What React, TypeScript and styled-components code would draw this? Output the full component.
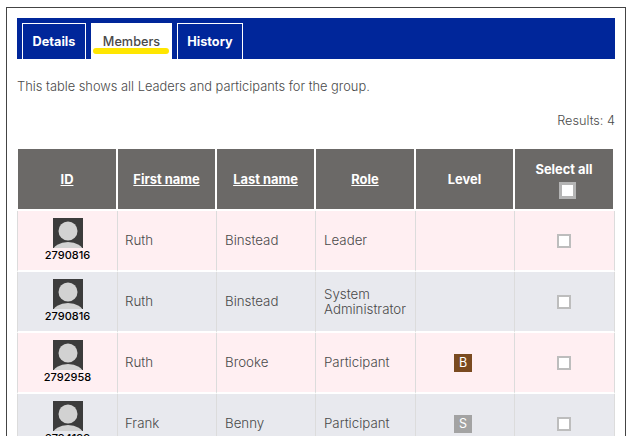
import styled, { createGlobalStyle } from "styled-components";

interface Member {
  id: string;
  first: string;
  last: string;
  role: string;
  level?: "B" | "S";
}

const members: Member[] = [
  { id: "2790816", first: "Ruth", last: "Binstead", role: "Leader" },
  { id: "2790816", first: "Ruth", last: "Binstead", role: "System Administrator" },
  { id: "2792958", first: "Ruth", last: "Brooke", role: "Participant", level: "B" },
  { id: "2794199", first: "Frank", last: "Benny", role: "Participant", level: "S" },
];

const GlobalStyle = createGlobalStyle`
  html, body {
    margin: 0;
    height: 436px;
    overflow: hidden;
    background: #fff;
  }
  body {
    font-family: "Inter", "Liberation Sans", sans-serif;
    color: #4a4a4a;
  }
`;

const Frame = styled.div`
  box-sizing: border-box;
  width: 620px;
  margin: 7px 0 0 6px;
  padding: 10px 10px 0 10px;
  border: 1px solid #444;
`;

const TabBar = styled.nav`
  display: flex;
  align-items: flex-end;
  gap: 5px;
  height: 41px;
  padding-left: 5px;
  background: #00269a;
`;

const Tab = styled.a<{ $active?: boolean; $width: number }>`
  box-sizing: border-box;
  position: relative;
  display: flex;
  align-items: center;
  justify-content: center;
  width: ${(p) => p.$width}px;
  height: 36px;
  border: 1px solid #fff;
  border-bottom: 0;
  background: ${(p) => (p.$active ? "#fff" : "#00269a")};
  color: ${(p) => (p.$active ? "#4a4a4a" : "#fff")};
  font-size: 12.7px;
  font-weight: ${(p) => (p.$active ? 500 : 700)};
`;

const Highlight = styled.span`
  position: absolute;
  left: 1px;
  right: 2px;
  bottom: 5px;
  height: 6px;
  border-radius: 3px;
  background: #ffe600;
`;

const Intro = styled.p`
  margin: 20px 0 0;
  font-size: 12.85px;
  line-height: 16px;
  font-weight: 300;
`;

const Results = styled.p`
  margin: 18px 0 0;
  text-align: right;
  font-size: 12.7px;
  line-height: 16px;
  font-weight: 300;
`;

const Table = styled.table`
  width: 598px;
  margin-top: 20px;
  border-collapse: separate;
  border-spacing: 0;
  table-layout: fixed;
`;

const HeadCell = styled.th`
  box-sizing: border-box;
  height: 62px;
  padding: 0;
  border-right: 2px solid #fff;
  border-bottom: 2px solid #fff;
  background: #6b6967;
  color: #fff;
  font-size: 12.9px;
  font-weight: 700;
  text-align: center;
  vertical-align: middle;

  &:first-child {
    border-left: 1px solid #fff;
  }
`;

const SortLink = styled.span`
  text-decoration: underline;
`;

const SelectAll = styled.div`
  display: flex;
  flex-direction: column;
  align-items: center;
  gap: 5px;
  padding-top: 2px;
`;

const HeadCheck = styled.span`
  box-sizing: border-box;
  width: 17px;
  height: 17px;
  margin-left: 6px;
  border: 3px solid #b4b4b4;
  background: #fff;
`;

const Row = styled.tr<{ $tint: "pink" | "grey" }>`
  background: ${(p) => (p.$tint === "pink" ? "#ffeff2" : "#e8e9ee")};
`;

const Cell = styled.td`
  box-sizing: border-box;
  height: 61px;
  padding: 0 8px;
  border-right: 1px solid #dcdcdc;
  border-bottom: 2px solid #fff;
  font-size: 13.3px;
  line-height: 15px;
  font-weight: 300;
  vertical-align: middle;

  &:first-child {
    border-left: 1px solid #dcdcdc;
  }
`;

const FirstNameCell = styled(Cell)`
  padding-left: 7px;
`;

const CentreCell = styled(Cell)`
  padding: 0;
  text-align: center;
`;

const IdBlock = styled.div`
  display: flex;
  flex-direction: column;
  align-items: center;
  padding-bottom: 2px;
  color: #000;
  font-size: 11px;
  line-height: 14px;
  font-weight: 500;
`;

const Avatar = styled.svg`
  display: block;
  width: 30px;
  height: 30px;
`;

const Badge = styled.span<{ $level: "B" | "S" }>`
  display: inline-flex;
  align-items: center;
  justify-content: center;
  width: 18px;
  height: 18px;
  margin-right: 4px;
  background: ${(p) => (p.$level === "B" ? "#7a4a20" : "#a3a3a3")};
  color: #fff;
  font-size: 12.5px;
  font-weight: 400;
  vertical-align: middle;
`;

const RowCheck = styled.span`
  box-sizing: border-box;
  display: inline-block;
  width: 14px;
  height: 14px;
  margin-right: 2px;
  border: 2px solid #bdbdbd;
  background: #fff;
  vertical-align: middle;
`;

const AvatarIcon = () => (
  <Avatar viewBox="0 0 30 30">
    <rect width="30" height="30" fill="#3c3c3c" />
    <circle cx="15" cy="13" r="9.5" fill="#d2d2d2" />
    <ellipse cx="15" cy="33" rx="15" ry="9" fill="#d2d2d2" />
  </Avatar>
);

export default function App() {
  return (
    <>
      <GlobalStyle />
      <Frame>
        <TabBar>
          <Tab $width={64}>Details</Tab>
          <Tab $width={81} $active>
            Members
            <Highlight />
          </Tab>
          <Tab $width={66}>History</Tab>
        </TabBar>
        <Intro>This table shows all Leaders and participants for the group.</Intro>
        <Results>Results: 4</Results>
        <Table>
          <colgroup>
            <col width="101" />
            <col width="99" />
            <col width="99" />
            <col width="100" />
            <col width="99" />
            <col width="100" />
          </colgroup>
          <thead>
            <tr>
              <HeadCell><SortLink>ID</SortLink></HeadCell>
              <HeadCell><SortLink>First name</SortLink></HeadCell>
              <HeadCell><SortLink>Last name</SortLink></HeadCell>
              <HeadCell><SortLink>Role</SortLink></HeadCell>
              <HeadCell>Level</HeadCell>
              <HeadCell>
                <SelectAll>
                  Select all
                  <HeadCheck />
                </SelectAll>
              </HeadCell>
            </tr>
          </thead>
          <tbody>
            {members.map((m, i) => (
              <Row key={i} $tint={i % 2 === 0 ? "pink" : "grey"}>
                <CentreCell>
                  <IdBlock>
                    <AvatarIcon />
                    {m.id}
                  </IdBlock>
                </CentreCell>
                <FirstNameCell>{m.first}</FirstNameCell>
                <Cell>{m.last}</Cell>
                <Cell>{m.role}</Cell>
                <CentreCell>{m.level && <Badge $level={m.level}>{m.level}</Badge>}</CentreCell>
                <CentreCell><RowCheck /></CentreCell>
              </Row>
            ))}
          </tbody>
        </Table>
      </Frame>
    </>
  );
}
